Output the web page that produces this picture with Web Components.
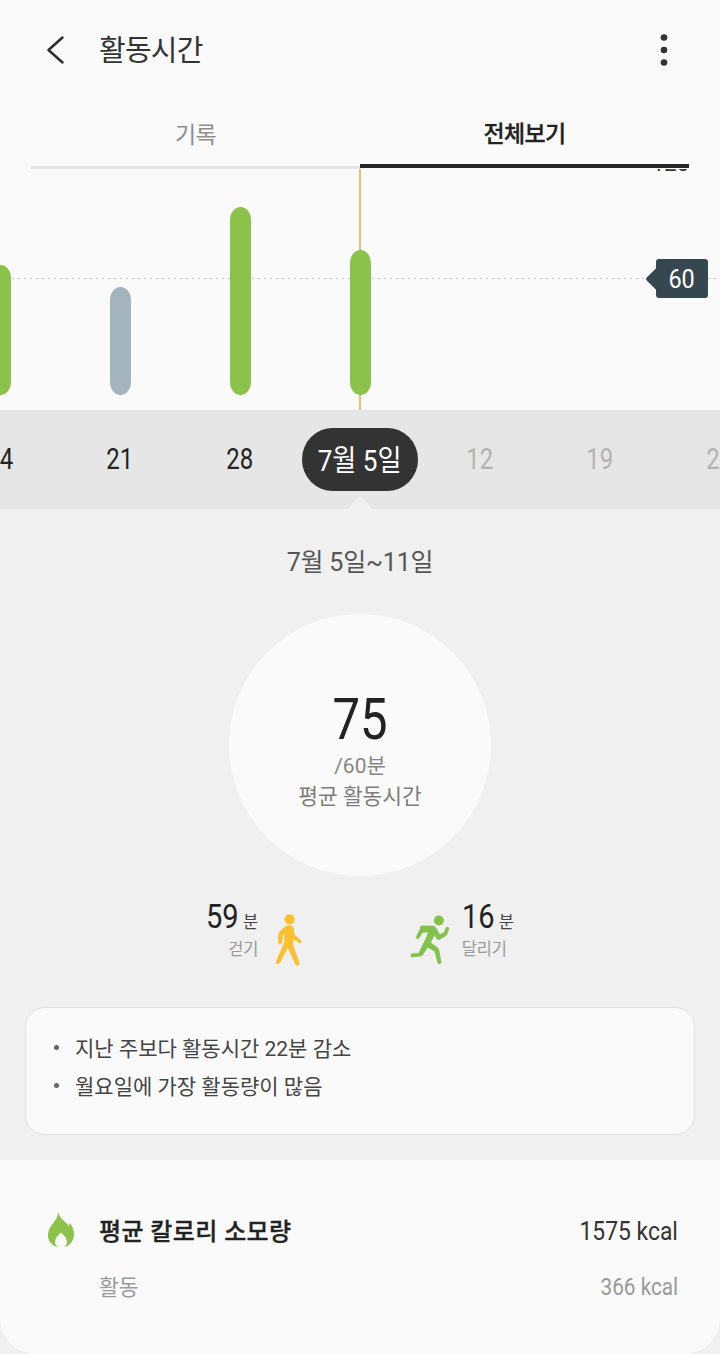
<!DOCTYPE html>
<html lang="ko"><head><meta charset="utf-8">
<style>
html,body{margin:0;padding:0;background:#f0f0f0}
body{width:720px;height:1354px;overflow:hidden;font-family:Roboto,"Noto Sans CJK KR",sans-serif}
</style></head><body>
<activity-page></activity-page>
<script>
const FONT='Roboto,"Noto Sans CJK KR",sans-serif';
function def(name,css,html){
  customElements.define(name,class extends HTMLElement{
    constructor(){super();const s=this.attachShadow({mode:'open'});
      s.innerHTML=`<style>${css}</style>${typeof html==='function'?html(this):html}`;}
  });
}
def('app-bar',`:host{display:flex;align-items:center;height:100px;background:#fafafa;box-sizing:border-box;font-family:${FONT}}
svg{display:block;flex:none}
.back{margin-left:45px;width:20px;height:30px;margin-top:-1px}
.t{margin-left:34px;font-size:29px;color:#333;letter-spacing:-.75px;flex:1;line-height:1;padding-top:3px}
.m{margin-right:50px;width:12px;height:32px}`,
`<svg class="back" viewBox="0 0 20 30"><path d="M17.500 2.500 3.500 15l14 12.500" fill="none" stroke="#2c2c2c" stroke-width="2.500" stroke-linecap="round" stroke-linejoin="round"/></svg>
<span class="t"><slot></slot></span>
<svg class="m" viewBox="0 0 12 32"><circle cx="6" cy="3.500" r="3.300" fill="#333"/><circle cx="6" cy="16" r="3.300" fill="#333"/><circle cx="6" cy="28.500" r="3.300" fill="#333"/></svg>`);

def('tab-bar',`:host{display:flex;height:69px;padding:0 31px;background:#fafafa;font-family:${FONT};position:relative;z-index:2}
.tab{flex:1;display:flex;align-items:center;justify-content:center;font-size:23px;letter-spacing:-.6px;box-sizing:border-box;height:69px;padding-bottom:1px}
.a{color:#8e8e8e;border-bottom:3px solid #e6e6e6}
.b{color:#222;border-bottom:4px solid #252525;margin-bottom:1px;height:68px;padding-bottom:0;font-weight:500;-webkit-text-stroke:.3px #222}`,
`<div class="tab a">기록</div><div class="tab b">전체보기</div>`);

def('bar-chart',`:host{display:flex;align-items:flex-end;position:relative;overflow:hidden;height:241px;background:#fafafa;font-family:${FONT}}
.cols{display:flex;align-items:flex-end;height:226px;margin-left:-60px;padding-bottom:15px;position:relative;z-index:1}
.c{width:120px;display:flex;justify-content:center;align-items:flex-end}
.b{width:21px;border-radius:10.500px/13px;background:#8bc34a}
.g{background:#a3b4bc}
.grid{position:absolute;left:0;right:0;top:109px;height:1px;background:repeating-linear-gradient(90deg,#c8c8c8 0 2px,transparent 2px 6px)}
.sel{position:absolute;left:359px;width:2px;top:0;bottom:0;background:#e3c06f}
.top{position:absolute;right:31px;top:-16px;font-size:22px;color:#333;line-height:22px}
.tip{position:absolute;z-index:2;left:656px;top:90px;width:52px;height:39px;background:#37474f;border-radius:3px;color:#fff;font-size:26px;display:flex;align-items:center;justify-content:center;line-height:1}
.tip::before{content:"";position:absolute;left:-7px;top:10.500px;width:18px;height:18px;background:#37474f;transform:rotate(45deg);border-radius:2px}
.tip span{position:relative;display:inline-block;transform:scaleX(.9)}`,
`<div class="grid"></div><div class="sel"></div><div class="top">120</div>
<div class="cols"><div class="c"><div class="b" style="height:130px"></div></div>
<div class="c"><div class="b g" style="height:108px"></div></div>
<div class="c"><div class="b" style="height:188px"></div></div>
<div class="c"><div class="b" style="height:145px"></div></div></div>
<div class="tip"><span>60</span></div>`);

def('date-strip',`:host{display:flex;position:relative;height:99px;background:#e6e6e6;overflow:hidden;font-family:${FONT}}
.r{display:flex;margin-left:-60px;align-items:flex-start;padding-top:18px}
.d{width:120px;height:63px;box-sizing:border-box;padding-bottom:2px;display:flex;align-items:center;justify-content:center;font-size:30px;color:#222}
.d span{display:inline-block;transform:scaleX(.8)}
.f{color:#b3b3b3}
.pill{background:#333;border-radius:31px;width:116px;height:63px;box-sizing:border-box;padding-bottom:3px;margin:0 2px;color:#fff;display:flex;align-items:center;justify-content:center;font-size:29px;white-space:nowrap}
.pill span{display:inline-block;transform:scaleX(.9)}
.tick{position:absolute;left:348px;bottom:0;width:0;height:0;border-left:12px solid transparent;border-right:12px solid transparent;border-bottom:14px solid #f0f0f0}`,
`<div class="r"><div class="d"><span>14</span></div><div class="d"><span>21</span></div><div class="d"><span>28</span></div>
<div class="pill"><span>7월 5일</span></div>
<div class="d f"><span>12</span></div><div class="d f"><span>19</span></div><div class="d f"><span>26</span></div></div><div class="tick"></div>`);

def('ring-total',`:host{display:flex;flex-direction:column;align-items:center;width:262px;height:262px;border-radius:50%;background:#fafafa;font-family:${FONT};box-sizing:border-box;padding-top:76px;text-align:center}
.n{font-size:57px;line-height:60px;color:#222;display:inline-block;transform:scaleX(.86)}
.u{font-size:21px;line-height:30px;color:#858585;margin-top:1px}
.l{font-size:21.500px;line-height:30px;color:#7d7d7d;letter-spacing:-.1px;padding-top:1px}`,
`<div class="n"><slot name="n"></slot></div><div class="u"><slot name="u"></slot></div><div class="l"><slot name="l"></slot></div>`);

def('stat-item',`:host{display:flex;flex-direction:column;font-family:${FONT}}
.top{display:flex;align-items:baseline;gap:5px;color:#222}
.n{font-size:33px;line-height:36px;display:inline-block;transform:scaleX(.88);transform-origin:left;margin-right:-5px}
.u{font-size:16.500px;color:#444}
.l{font-size:16.500px;color:#999;line-height:24px;margin-top:3px;letter-spacing:-.2px}
:host([align=end]) .l{text-align:right}`,
`<div class="top"><span class="n"><slot name="n"></slot></span><span class="u">분</span></div><div class="l"><slot name="l"></slot></div>`);

def('week-summary',`:host{display:flex;flex-direction:column;align-items:center;height:651px;background:#f0f0f0;font-family:${FONT};box-sizing:border-box;padding-top:36px}
.date{font-size:25px;line-height:36px;color:#555;letter-spacing:-.2px}
.ring{margin-top:33px}
.stats{display:flex;align-items:flex-start;margin:23px 0 0 0;width:308px;justify-content:space-between;height:73px}
.s{display:flex;gap:15px}
.r{gap:11px}
svg{display:block;flex:none}
.notes{margin-top:35px}`,
`<div class="date">7월 5일~11일</div>
<div class="ring"><ring-total><span slot="n">75</span><span slot="u">/60분</span><span slot="l">평균 활동시간</span></ring-total></div>
<div class="stats">
 <div class="s"><stat-item align="end"><span slot="n">59</span><span slot="l">걷기</span></stat-item>
 <svg width="31" height="58" viewBox="0 0 28 52" style="margin-top:14px"><circle cx="15" cy="5.500" r="4.600" fill="#fbc02d"/><path d="M11 12.500c2-1.600 6-1.600 7 .6l1.200 6.600 5.800 5c1 1 .1 2.600-1.300 1.800l-5.700-3.800-.4 5.600 5.800 16.500c.7 2-2 3-3 1l-7-15.500-7.500 14.400c-1 2-3.600.7-2.700-1.200l7.300-16.700.5-9.800-2.300 2.500-.9 7c-.3 1.800-3 1.600-2.900-.4l.6-8.600z" fill="#fbc02d" stroke="#fbc02d" stroke-width=".9"/></svg></div>
 <div class="s r"><svg width="40" height="53" viewBox="0 0 38 50" style="margin-top:15px"><circle cx="26.500" cy="6" r="4.700" fill="#82c24a"/><path d="M9 13.500c-.4-1.300.4-2.200 1.500-2.200h9.500c2 0 3 .8 4 2.500l3.300 6 4.500-2.600 1.500-4c.8-1.700 3-.8 2.400.9l-1.700 5.100c-.2.500-.4.800-.9 1.100l-6 3.500c-1 .6-2 .2-2.600-.7l-2.300-3.700-3.700 7.600 6.800 5.200c.7.600 1 1.200 1.100 2.100l2 11c.3 2-2.400 2.600-2.900.6l-2.700-10.500-7-4.300-4.800 7.500c-.5.700-1 1-2 1.100l-10 1c-2 .2-2.300-2.700-.2-2.800l8.700-.6 7.800-16.300 1.300-4h-5.500l-3.500 5.500c-1 1.600-3.200.4-2.300-1.300z" fill="#82c24a" stroke="#82c24a" stroke-width=".8"/></svg>
 <stat-item><span slot="n">16</span><span slot="l">달리기</span></stat-item></div>
</div>
<div class="notes"><note-card><div>지난 주보다 활동시간 22분 감소</div><div>월요일에 가장 활동량이 많음</div></note-card></div>`);

def('note-card',`:host{display:block;width:670px;height:128px;box-sizing:border-box;background:#fafafa;border:1px solid #dfdfdf;border-radius:20px;padding:20px 28px;font-family:${FONT}}
::slotted(div){display:flex;align-items:center;height:38px;font-size:21px;color:#444}
::slotted(div)::before{content:"";width:5px;height:5px;border-radius:50%;background:#666;margin-right:16px;flex:none}`,
`<slot></slot>`);

def('calorie-card',`:host{display:block;height:194px;background:#fafafa;border-radius:0 0 36px 36px;font-family:${FONT};box-sizing:border-box;padding:49px 42px 0 47px}
.r{display:flex;align-items:center;height:40px}
svg{display:block;flex:none;margin:2px 24px 0 0}
.t{flex:1;font-size:24px;font-weight:500;color:#222;letter-spacing:.4px;-webkit-text-stroke:.3px #222}
.v{font-size:26px;color:#333;display:inline-block;padding-top:3px;transform:scaleX(.88);transform-origin:right}
.r2{display:flex;align-items:center;height:30px;margin-top:21px;padding-left:52px}
.t2{flex:1;font-size:21.500px;color:#999}
.v2{font-size:23px;color:#999;display:inline-block;padding-top:5px;transform:scaleX(.9);transform-origin:right}`,
`<div class="r"><svg width="28" height="38" viewBox="0 0 28 38"><path fill="#8bc34a" fill-rule="evenodd" d="M11 .5c1 4.500 3 7 6 9.500 2 1.700 4 3 4.500 5.500.7-.9 1.100-2.200 1-3.700 2.800 3.300 4.600 7.200 4.500 11.700-.2 7.600-5.800 13-13 13S1 31.200 1 24.500C1 19 3.700 15.500 6.300 12 8.700 8.800 11.300 5.700 11 .5zM14 21.500c-2.800 2.700-6 5.600-6 9.500 0 2.800 2 5 4.300 5.500h3.400C18 36 20 33.800 20 31c0-3.900-3.200-6.800-6-9.500z"/></svg><span class="t">평균 칼로리 소모량</span><span class="v">1575 kcal</span></div>
<div class="r2"><span class="t2">활동</span><span class="v2">366 kcal</span></div>`);

def('activity-page',`:host{display:block;width:720px;height:1354px;overflow:hidden;background:#f0f0f0;font-family:${FONT}}`,
`<app-bar>활동시간</app-bar><tab-bar></tab-bar><bar-chart></bar-chart><date-strip></date-strip><week-summary></week-summary><calorie-card></calorie-card>`);
</script></body></html>
